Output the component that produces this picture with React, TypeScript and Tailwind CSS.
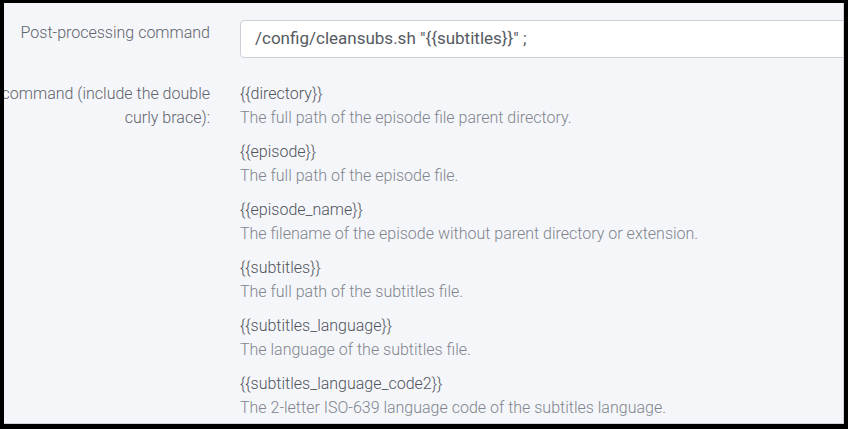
const vars = [
  ["{{directory}}", "The full path of the episode file parent directory."],
  ["{{episode}}", "The full path of the episode file."],
  ["{{episode_name}}", "The filename of the episode without parent directory or extension."],
  ["{{subtitles}}", "The full path of the subtitles file."],
  ["{{subtitles_language}}", "The language of the subtitles file."],
  ["{{subtitles_language_code2}}", "The 2-letter ISO-639 language code of the subtitles language."],
];

export default function App() {
  return (
    <div className="w-[848px] h-[429px] bg-black pl-[4px] pt-[3px] pr-[4px] pb-[5px] font-['Roboto',sans-serif]">
      <div className="w-full h-full bg-[#f5f6fa] border-r border-b border-[#cfd2d8] overflow-hidden">
        <div className="flex pt-[17px]">
          <div className="w-[206px] shrink-0 flex justify-end pt-[1px]">
            <div className="text-[16px] font-light leading-6 text-[#5f636a] whitespace-nowrap">Post-processing command</div>
          </div>
          <div className="ml-[30px] flex-1 -mr-[10px]">
            <div className="h-[38px] bg-white border border-[#ccd0d6] rounded-l-[4px] flex items-center pl-[14px] text-[17px] text-[#555a62] whitespace-nowrap">
              /config/cleansubs.sh "{"{{subtitles}}"}" ;
            </div>
          </div>
        </div>
        <div className="flex pt-[24px]">
          <div className="w-[206px] shrink-0 flex justify-end">
            <div className="text-[16px] font-light leading-6 text-[#5f636a] whitespace-nowrap text-right">
              command (include the double
              <br />
              curly brace):
            </div>
          </div>
          <div className="ml-[30px] flex flex-col gap-[10px]">
            {vars.map(([k, d]) => (
              <div key={k} className="text-[16px] font-light leading-6">
                <div className="text-[#50545b]">{k}</div>
                <div className="text-[#80858d]">{d}</div>
              </div>
            ))}
          </div>
        </div>
      </div>
    </div>
  );
}
